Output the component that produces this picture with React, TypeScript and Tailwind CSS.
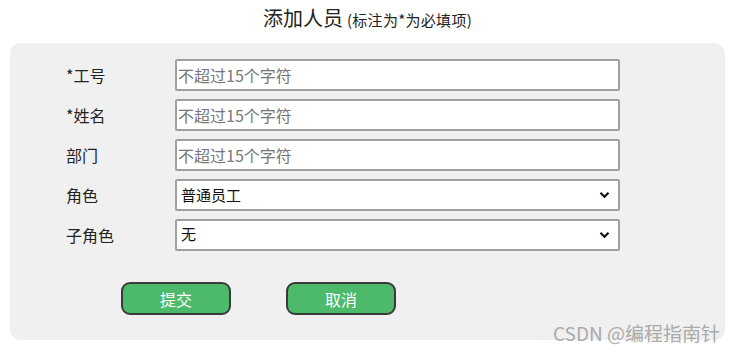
import React from "react";

const font = { fontFamily: '"Microsoft YaHei", "Noto Sans CJK SC", "Noto Sans", sans-serif' };

function Chevron() {
  return (
    <svg className="pointer-events-none absolute right-[8px] top-1/2 -translate-y-1/2" width="11" height="8" viewBox="0 0 11 8">
      <path d="M1.5 1.8 L5.5 5.8 L9.5 1.8" fill="none" stroke="#111" strokeWidth="2.2" />
    </svg>
  );
}

export default function App() {
  const textRows = ["*工号", "*姓名", "部门"];

  return (
    <div className="relative w-[739px] h-[355px] bg-white overflow-hidden text-[#222]" style={font}>
      {/* title */}
      <div className="flex items-baseline justify-center pt-[4px] h-[43px] pr-[4px]">
        <span className="text-[20px] leading-[28px]">添加人员</span>
        <span className="text-[15px] leading-[20px] ml-[4px] tracking-[0.3px]">(标注为*为必填项)</span>
      </div>

      {/* form panel */}
      <div className="ml-[10px] w-[715px] h-[297px] rounded-[10px] bg-[#f0f0f0] pt-[16px] pl-[56px]">
        <div className="flex flex-col gap-[8px]">
          {textRows.map((label) => (
            <div key={label} className="flex items-center h-[32px]">
              <span className="w-[109px] text-[16px]">{label}</span>
              <input
                placeholder="不超过15个字符"
                className="w-[445px] h-[32px] bg-white border-2 border-[#a0a0a0] rounded-[2px] px-[1px] text-[16px] placeholder:text-[#777] outline-none"
                style={font}
              />
            </div>
          ))}
          <div className="flex items-center h-[32px]">
            <span className="w-[109px] text-[16px]">角色</span>
            <div className="relative w-[445px] h-[32px] bg-white border-2 border-[#a0a0a0] rounded-[2px] flex items-center px-[4px] text-[15px] text-[#111]">
              普通员工
              <Chevron />
            </div>
          </div>
          <div className="flex items-center h-[31px]">
            <span className="w-[109px] text-[16px]">子角色</span>
            <div className="relative w-[445px] h-[32px] bg-white border-2 border-[#a0a0a0] rounded-[2px] flex items-center px-[4px] text-[15px] text-[#111]">
              无
              <Chevron />
            </div>
          </div>
        </div>

        <div className="flex gap-[55px] mt-[32px] ml-[55px]">
          <button className="w-[110px] h-[33px] rounded-[9px] bg-[#4db96b] border-2 border-[#3a3a3a] text-white text-[16px]" style={font}>
            提交
          </button>
          <button className="w-[110px] h-[33px] rounded-[9px] bg-[#4db96b] border-2 border-[#3a3a3a] text-white text-[16px]" style={font}>
            取消
          </button>
        </div>
      </div>

      {/* watermark */}
      <div className="absolute left-[553px] top-[320px] text-[19px] leading-[26px] text-[#999] opacity-80 whitespace-nowrap">
        CSDN @编程指南针
      </div>
    </div>
  );
}
